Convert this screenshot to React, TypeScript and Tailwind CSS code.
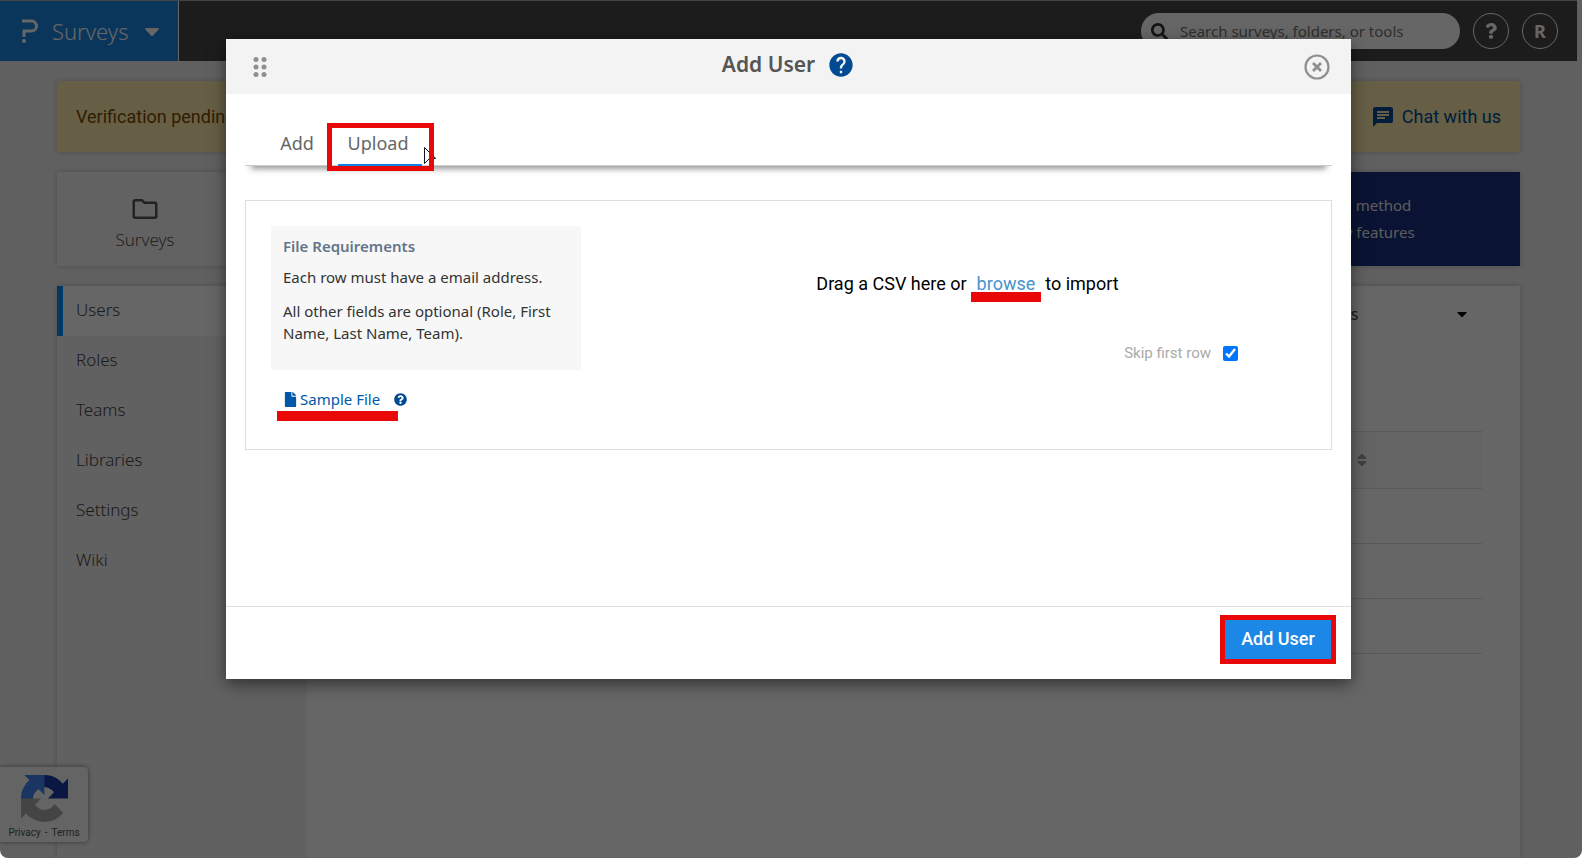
import { FaCaretDown, FaFile, FaQuestion, FaQuestionCircle, FaSearch, FaSort } from "react-icons/fa";
import { MdChat, MdHelp, MdOutlineFolder } from "react-icons/md";

const sidebarLinks = ["Users", "Roles", "Teams", "Libraries", "Settings", "Wiki"];

const cardShadow = "shadow-[0_0_6px_rgba(0,0,0,0.2)]";

function LogoMark() {
  return (
    <svg aria-hidden="true" className="h-6 w-4" fill="none" viewBox="0 0 16 24">
      <path d="M0 2H9.500a5 5 0 0 1 5 5v0a5 5 0 0 1-5 5H2v6" stroke="currentColor" strokeWidth="3" />
      <circle cx="2" cy="22" fill="currentColor" r="2" />
    </svg>
  );
}

function TopBar() {
  return (
    <header className="flex h-[61px] items-center border-t border-[#aaaaaa] bg-[#484848] text-white">
      <button className="flex h-full w-[179px] items-center border-r border-white bg-[#1b87e6] pl-[22px] text-[22px] font-light" type="button">
        <LogoMark />
        <span className="ml-3.5">Surveys</span>
        <FaCaretDown className="ml-3 size-6" />
      </button>
      <div className="ml-auto flex items-center gap-[13px] pr-[19px]">
        <label className="flex h-9 w-[319px] items-center gap-3 rounded-full bg-white pl-2.5 text-[#333333]">
          <FaSearch className="size-[17px]" />
          <input
            aria-label="Search"
            className="min-w-0 flex-1 text-[15px] outline-none placeholder:text-[#757575]"
            placeholder="Search surveys, folders, or tools"
            type="search"
          />
        </label>
        <button aria-label="Help" className="flex size-9 items-center justify-center rounded-full border border-white" type="button">
          <FaQuestion className="size-4" />
        </button>
        <button className="flex size-9 items-center justify-center rounded-full border border-white text-lg font-bold" type="button">
          R
        </button>
      </div>
    </header>
  );
}

function RecaptchaBadge() {
  return (
    <div className="absolute bottom-4 left-0 flex h-[75px] w-[88px] flex-col items-center rounded-r-sm bg-[#f9f9f9] pt-2 shadow-[0_0_5px_gray]">
      <svg aria-hidden="true" className="size-[47px]" viewBox="0 0 64 64">
        <path
          d="M64 31.955l-.033-1.37V4.687l-7.16 7.16C50.948 4.674 42.033.093 32.05.093c-10.4 0-19.622 4.960-25.458 12.640l11.736 11.860a15.550 15.550 0 0 1 4.754-5.334c2.050-1.600 4.952-2.906 8.968-2.906.485 0 .860.057 1.135.163 4.976.393 9.288 3.140 11.828 7.124l-8.307 8.307L64 31.953"
          fill="#1c3aa9"
        />
        <path
          d="M31.862.094l-1.370.033H4.594l7.160 7.160C4.580 13.147 0 22.060 0 32.046c0 10.400 4.960 19.622 12.640 25.458L24.500 45.768a15.550 15.550 0 0 1-5.334-4.754c-1.600-2.050-2.906-4.952-2.906-8.968 0-.485.057-.860.163-1.135.393-4.976 3.140-9.288 7.124-11.828l8.307 8.307L31.860.095"
          fill="#4285f4"
        />
        <path
          d="M.001 32.045l.033 1.370v25.898l7.160-7.160c5.860 7.173 14.774 11.754 24.760 11.754 10.400 0 19.622-4.960 25.458-12.640l-11.736-11.860a15.550 15.550 0 0 1-4.754 5.334c-2.050 1.600-4.952 2.906-8.968 2.906-.485 0-.860-.057-1.135-.163-4.976-.393-9.288-3.140-11.828-7.124l8.307-8.307c-10.522.040-22.400.066-27.295-.005"
          fill="#ababab"
        />
      </svg>
      <p className="mt-[3px] flex gap-1 font-['Roboto',sans-serif] text-[10px] leading-4 text-[#555555]">
        <a href="#privacy">Privacy</a>-<a href="#terms">Terms</a>
      </p>
    </div>
  );
}

function AccountPage() {
  return (
    <div className="mx-[57px] mt-5 grid gap-5">
      <div className={`flex h-[71px] items-center justify-between bg-[#ffeeb0] px-[19px] font-['Roboto',sans-serif] text-lg ${cardShadow}`}>
        <p className="text-[#7c4a00]">Verification pending</p>
        <a className="flex items-center gap-[7px] text-[#004a94]" href="#chat">
          <MdChat className="size-6" />
          Chat with us
        </a>
      </div>
      <div className={`flex h-[94px] bg-[#f6f6f6] ${cardShadow}`}>
        <a className="flex w-44 flex-col items-center justify-end gap-1 pb-3.5 text-[17px] leading-6 font-light text-[#555555]" href="#surveys">
          <MdOutlineFolder className="size-[30px]" />
          Surveys
        </a>
        <ul className="ml-auto flex w-[275px] flex-col justify-center bg-[#193081] pl-4 text-[15px] leading-[27px] text-[#e6e6e6]">
          <li>Add a sign in method</li>
          <li>Learn of new features</li>
        </ul>
      </div>
      <div className={`flex min-h-[572px] bg-white ${cardShadow}`}>
        <nav className="w-[250px] bg-[#f2f2f2] text-[17px] font-light text-[#444444]">
          {sidebarLinks.map((link, index) => (
            <a
              className={
                index === 0
                  ? "flex h-[50px] items-center border-l-6 border-[#0090ff] bg-white pb-0.5 pl-[13px]"
                  : "flex h-[50px] items-center pb-[3px] pl-[19px]"
              }
              href={`#${link.toLowerCase()}`}
              key={link}
            >
              {link}
            </a>
          ))}
        </nav>
        <div className="flex-1 px-[38px] pt-2">
          <div className="ml-auto flex h-10 w-[205px] items-center pr-3">
            <select aria-label="User filter" className="flex-1 appearance-none pl-4 text-base text-[#444444]">
              <option>All Users</option>
            </select>
            <FaCaretDown className="size-4" />
          </div>
          <table className="mt-[97px] w-full border-collapse">
            <thead>
              <tr className="h-[57px] border-y border-[#e0e0e0] bg-[#fafafa]">
                <th aria-label="User" />
                <th aria-label="Status" className="w-32 text-left">
                  <FaSort className="size-4 text-[#a0a0a0]" />
                </th>
              </tr>
            </thead>
            <tbody>
              {[0, 1, 2].map((row) => (
                <tr className="h-[55px] border-b border-[#dddddd]" key={row}>
                  <td />
                  <td />
                </tr>
              ))}
            </tbody>
          </table>
        </div>
      </div>
    </div>
  );
}

function DialogHeader() {
  return (
    <div className="flex h-[55px] items-center justify-between bg-[#f3f3f3] px-[21px] text-[#8f8f8f]">
      <button aria-label="Move dialog" className="w-[26px]" type="button">
        <svg aria-hidden="true" className="mx-auto h-5 w-3.5" fill="currentColor" viewBox="0 0 14 20">
          <circle cx="3" cy="2.500" r="2.500" />
          <circle cx="11" cy="2.500" r="2.500" />
          <circle cx="3" cy="10" r="2.500" />
          <circle cx="11" cy="10" r="2.500" />
          <circle cx="3" cy="17.500" r="2.500" />
          <circle cx="11" cy="17.500" r="2.500" />
        </svg>
      </button>
      <h1 className="flex items-center gap-3 pb-[3px] text-[21px] font-semibold text-[#555555]">
        Add User
        <MdHelp className="size-7 text-[#004a94]" />
      </h1>
      <button aria-label="Close" type="button">
        <svg aria-hidden="true" className="size-[26px]" fill="none" stroke="currentColor" viewBox="0 0 26 26">
          <circle cx="13" cy="13" r="11.500" strokeWidth="2.200" />
          <path d="M9 9l8 8M17 9l-8 8" strokeWidth="2.800" />
        </svg>
      </button>
    </div>
  );
}

function Tabs() {
  return (
    <div className="flex h-[72px] items-end border-b border-[#cccccc] pl-[22px] text-lg text-[#666666] shadow-[0_9px_6px_-6px_#999999]" role="tablist">
      <button className="h-10 w-[60px] pb-1" role="tab" type="button">
        Add
      </button>
      <div className="relative -mb-1.5 h-12 w-[107px] border-5 border-[#e90808] px-1.5">
        <button aria-selected="true" className="h-full w-[84px] border-b-2 border-[#1083e8] pr-1 pb-1.5" role="tab" type="button">
          Upload
        </button>
        {/* pointer, half hidden by the frame */}
        <svg aria-hidden="true" className="absolute top-[19px] left-[92px] h-[18px] w-3" fill="none" viewBox="0 0 12 18">
          <path d="M5 5L.5 .5v16L5 12M10 9.500l1.500 2H10" stroke="#111122" />
        </svg>
      </div>
    </div>
  );
}

function UploadPanel() {
  return (
    <div className="mt-[34px] flex h-[250px] border border-[#dddddd] p-[25px] text-[15px]">
      <div className="w-[310px]">
        <section className="h-36 bg-[#f7f7f7] px-3 py-2 text-[#333333]">
          <h2 className="leading-6 font-semibold text-[#64748b]">File Requirements</h2>
          <p className="mt-2 leading-[22px]">Each row must have a email address.</p>
          <p className="mt-3 leading-[22px]">All other fields are optional (Role, First Name, Last Name, Team).</p>
        </section>
        <div className="mt-[18px] flex items-center gap-3.5 px-3 text-[#0058a8]">
          <a className="flex items-center gap-0.5" href="#sample">
            <FaFile className="size-[15px]" />
            Sample File
          </a>
          <FaQuestionCircle className="size-[13px] text-[#004a94]" />
        </div>
        <div className="ml-1.5 h-2.5 w-[121px] bg-[#e90808]" />
      </div>
      <div className="flex flex-1 flex-col items-center pt-11">
        <p className="flex pl-12 font-['Roboto',sans-serif] text-lg text-black">
          Drag a CSV here or
          <span className="relative mx-1 px-1.5">
            <a className="text-[#4593cc]" href="#browse">
              browse
            </a>
            <span className="absolute inset-x-0 -bottom-1 h-2.5 bg-[#e90808]" />
          </span>
          to import
        </p>
        <label className="mt-11 mr-[68px] flex items-center gap-3 self-end font-['Roboto',sans-serif] text-[#aaaaaa]">
          Skip first row
          <input className="size-[15px] accent-[#0075ff]" defaultChecked type="checkbox" />
        </label>
      </div>
    </div>
  );
}

function AddUserDialog() {
  return (
    <section
      aria-label="Add User"
      aria-modal="true"
      className="mx-auto mt-[39px] w-[1125px] max-w-full bg-white shadow-[0_5px_15px_rgba(0,0,0,0.5)]"
      role="dialog"
    >
      <DialogHeader />
      <div className="h-[512px] px-[19px]">
        <Tabs />
        <UploadPanel />
      </div>
      <footer className="flex h-[73px] justify-end border-t border-[#e0e0e0] px-[15px] pt-2">
        <button
          className="h-[49px] w-[116px] border-5 border-[#e90808] bg-[#1b87e6] pb-0.5 font-['Roboto',sans-serif] text-lg font-medium text-white"
          type="button"
        >
          Add User
        </button>
      </footer>
    </section>
  );
}

export default function App() {
  return (
    <div className="h-screen bg-white font-['Noto_Sans',sans-serif]">
      <div className="relative h-full overflow-hidden rounded-b-lg bg-[#f1f1f1] pr-[5px]">
        <TopBar />
        <AccountPage />
        <RecaptchaBadge />
        <div className="absolute inset-0 bg-black/60 pr-[5px]">
          <AddUserDialog />
        </div>
      </div>
    </div>
  );
}
